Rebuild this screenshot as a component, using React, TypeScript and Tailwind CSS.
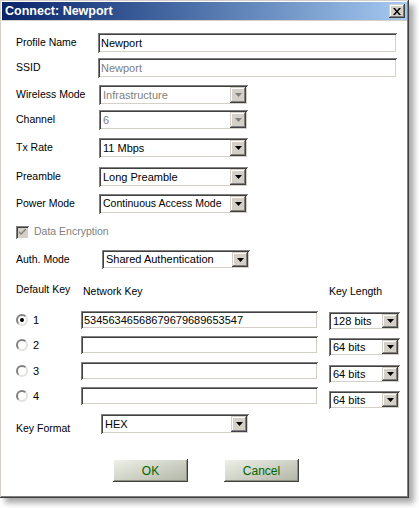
import React from "react";

const sunken =
  "shadow-[inset_1px_1px_#808080,inset_-1px_-1px_#ffffff,inset_2px_2px_#404040,inset_-2px_-2px_#d4d0c8]";
const raised =
  "shadow-[inset_-1px_-1px_#404040,inset_1px_1px_#d4d0c8,inset_-2px_-2px_#808080,inset_2px_2px_#ffffff]";

function Arrow({ disabled }: { disabled?: boolean }) {
  return (
    <div className={`w-[16px] shrink-0 self-stretch flex items-center justify-center bg-[#d4d0c8] ${raised}`}>
      <svg width="7" height="4" viewBox="0 0 7 4">
        <polygon points="0,0 7,0 3.5,4" fill={disabled ? "#808080" : "#000"} />
      </svg>
    </div>
  );
}

function Select({
  value,
  className,
  disabled,
}: {
  value: string;
  className: string;
  disabled?: boolean;
}) {
  return (
    <div className={`flex items-center p-[2px] bg-white ${sunken} ${className}`}>
      <span className={`flex-1 pl-[2px] whitespace-nowrap overflow-hidden ${disabled ? "text-[#808080]" : "text-black"}`}>
        {value}
      </span>
      <Arrow disabled={disabled} />
    </div>
  );
}

function Input({ value, className, disabled }: { value?: string; className: string; disabled?: boolean }) {
  return (
    <div className={`flex items-center px-[3px] bg-white ${sunken} ${className}`}>
      <span className={disabled ? "text-[#808080]" : "text-black"}>{value}</span>
    </div>
  );
}

function Radio({ checked }: { checked?: boolean }) {
  return (
    <div className="w-[12px] h-[12px] rounded-full border-[2px] border-t-[#808080] border-l-[#808080] border-r-[#e4e2dc] border-b-[#e4e2dc] bg-white flex items-center justify-center">
      {checked && <div className="w-[4px] h-[4px] rounded-full bg-black" />}
    </div>
  );
}

function Row({ label, children, className }: { label: string; children: React.ReactNode; className: string }) {
  return (
    <div className={`flex items-center ${className}`}>
      <div className="w-[82px] text-[10.5px]">{label}</div>
      {children}
    </div>
  );
}

const keys = [
  { n: "1", v: "53456346568679679689653547", len: "128 bits", checked: true, mt: "mt-[11px]", sel: "mt-[1px]" },
  { n: "2", v: "", len: "64 bits", mt: "mt-[7px]", sel: "mt-[2px]" },
  { n: "3", v: "", len: "64 bits", mt: "mt-[8px]", sel: "mt-[3px]" },
  { n: "4", v: "", len: "64 bits", mt: "mt-[7px]", sel: "mt-[4px]" },
];

export default function App() {
  return (
    <div className="w-[419px] h-[508px] bg-white font-['Liberation_Sans',Arial,sans-serif] text-[11px] text-black">
      <div className="w-[409px] h-[498px] bg-[#d4d0c8] p-[2px] flex flex-col shadow-[5px_5px_6px_rgba(0,0,0,0.35),inset_-1px_-1px_#404040,inset_1px_1px_#d4d0c8,inset_-2px_-2px_#808080,inset_2px_2px_#ffffff]">
        {/* title bar */}
        <div className="h-[18px] flex items-center justify-between bg-linear-to-r from-[#0a246a] to-[#a6caf0] pl-[3px] pr-[2px]">
          <span className="text-white font-bold text-[12.5px] leading-none">Connect: Newport</span>
          <div className={`w-[16px] h-[14px] bg-[#d4d0c8] flex items-center justify-center ${raised}`}>
            <svg width="8" height="7" viewBox="0 0 8 7">
              <path d="M0 0h2l2 2.5L6 0h2L5 3.5 8 7H6L4 4.5 2 7H0l3-3.5z" fill="#000" />
            </svg>
          </div>
        </div>

        {/* client */}
        <div className="flex-1 mt-[1px] bg-white pl-[14px] flex flex-col">
          <Row label="Profile Name" className="mt-[12px]">
            <Input value="Newport" className="w-[299px] h-[20px]" />
          </Row>
          <Row label="SSID" className="mt-[5px]">
            <Input value="Newport" disabled className="w-[299px] h-[20px]" />
          </Row>
          <Row label="Wireless Mode" className="mt-[7px]">
            <Select value="Infrastructure" disabled className="ml-[1px] w-[149px] h-[20px]" />
          </Row>
          <Row label="Channel" className="mt-[5px]">
            <Select value="6" disabled className="ml-[1px] w-[149px] h-[20px]" />
          </Row>
          <Row label="Tx Rate" className="mt-[8px]">
            <Select value="11 Mbps" className="ml-[1px] w-[149px] h-[20px]" />
          </Row>
          <Row label="Preamble" className="mt-[9px]">
            <Select value="Long Preamble" className="ml-[1px] w-[149px] h-[20px]" />
          </Row>
          <Row label="Power Mode" className="mt-[7px]">
            <Select value="Continuous Access Mode" className="ml-[1px] w-[149px] h-[20px] text-[10.5px]" />
          </Row>

          <div className="mt-[11px] flex items-center h-[14px]">
            <div className={`w-[13px] h-[13px] bg-[#d4d0c8] flex items-center justify-center ${sunken}`}>
              <svg width="7" height="7" viewBox="0 0 7 7">
                <path d="M0 2l2 2 5-5v2L2 6 0 4z" fill="#808080" />
              </svg>
            </div>
            <span className="ml-[5px] text-[#808080] text-[10.5px]">Data Encryption</span>
          </div>

          <Row label="Auth. Mode" className="mt-[11px]">
            <Select value="Shared Authentication" className="ml-[4px] w-[148px] h-[19px]" />
          </Row>

          {/* key header */}
          <div className="mt-[17px] flex items-end h-[14px] text-[10.5px]">
            <span className="w-[67px] -mt-[4px] self-start">Default Key</span>
            <span className="w-[246px]">Network Key</span>
            <span>Key Length</span>
          </div>

          {keys.map((k) => (
            <div key={k.n} className={`flex items-start h-[18px] ${k.mt}`}>
              <div className="w-[17px] h-[18px] flex items-center">
                <Radio checked={k.checked} />
              </div>
              <div className="w-[48px] h-[18px] flex items-center">{k.n}</div>
              <Input value={k.v} className="w-[237px] h-[18px]" />
              <Select value={k.len} className={`ml-[11px] w-[71px] h-[18px] shrink-0 ${k.sel}`} />
            </div>
          ))}

          <div className="mt-[9px] flex items-end">
            <div className="w-[85px] -mb-[3px] text-[10.5px]">Key Format</div>
            <Select value="HEX" className="w-[148px] h-[20px]" />
          </div>

          <div className="mt-[25px] flex ml-[97px] gap-[36px]">
            {["OK", "Cancel"].map((b) => (
              <div
                key={b}
                className="w-[75px] h-[23px] flex items-center justify-center bg-linear-to-br from-[#f0f2ea] to-[#b0b4a4] text-[#006600] text-[12px] shadow-[inset_-1px_-1px_#404040,inset_1px_1px_#ffffff,inset_-2px_-2px_#8c9080]"
              >
                {b}
              </div>
            ))}
          </div>
        </div>
      </div>
    </div>
  );
}
